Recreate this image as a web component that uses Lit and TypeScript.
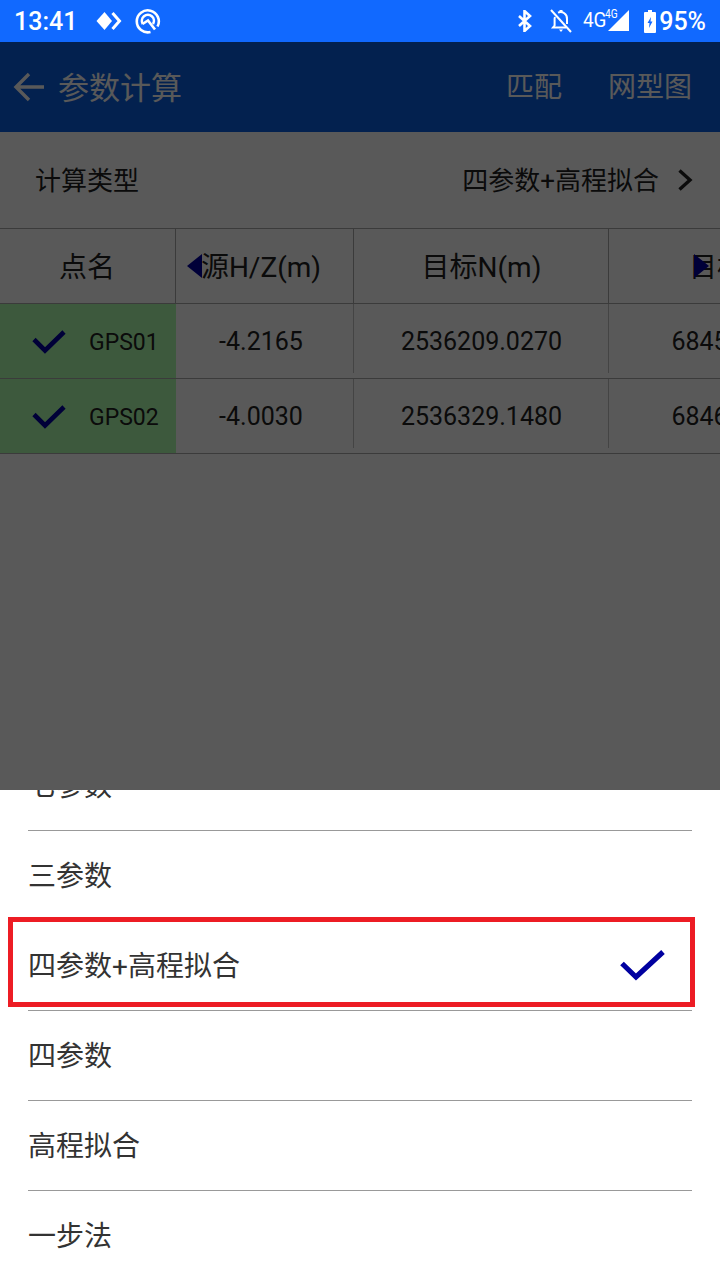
import { LitElement, html, css } from "lit";
import { customElement } from "lit/decorators.js";

const CHECK_SM = html`<svg class="chk" width="34" height="26" viewBox="0 0 34 26"><path d="M2 10.5 L13 21.5 L32 3" fill="none" stroke="#0000a0" stroke-width="4.6"/></svg>`;

@customElement("app-root")
export class AppRoot extends LitElement {
  static styles = css`
    :host { display: block; width: 720px; height: 1280px; overflow: hidden; font-family: Roboto, "Noto Sans CJK SC", sans-serif; background: #fff; }
    .page { display: flex; flex-direction: column; height: 1280px; }
    .status { height: 42px; flex: none; background: #1169ff; color: #fff; display: flex; align-items: center; padding: 0 14px; box-sizing: border-box; font-weight: 500; }
    .time { font-size: 25px; width: 82px; line-height: 42px; padding-top: 1px; }
    .status svg { display: block; flex: none; }
    .spacer { flex: 1; }
    .net { position: relative; width: 46px; height: 42px; margin-left: 11px; flex: none; }
    .net .big { position: absolute; left: 0; top: 8px; font-size: 21px; line-height: 24px; font-weight: 400; transform: scaleX(.9); transform-origin: left; }
    .net .small { position: absolute; left: 22px; top: 7px; font-size: 12px; line-height: 14px; font-weight: 400; transform: scaleX(.85); transform-origin: left; }
    .pct { font-size: 25px; line-height: 42px; margin-left: 3px; padding-top: 1px; }
    .screen { position: relative; flex: none; height: 748px; background: #fff; overflow: hidden; }
    .overlay { position: absolute; inset: 0; background: rgba(0,0,0,.65); }
    .bar { height: 90px; background: #095ee2; color: #fff; display: flex; align-items: center; padding: 0 28px 0 12px; box-sizing: border-box; }
    .bar span { padding-bottom: 4px; }
    .bar svg { margin-bottom: 1px; }
    .title { font-size: 31px; margin-left: 12px; flex: 1; }
    .act { font-size: 28px; margin-left: 47px; }
    .act.first { transform: translateX(1px); }
    .type { height: 97px; display: flex; align-items: center; padding: 0 26px 0 35px; font-size: 26px; color: #222; border-bottom: 1px solid #aaa; box-sizing: border-box; }
    .type span { padding-bottom: 4px; }
    .type .lab { flex: 1; }
    .type svg { margin-left: 17px; margin-bottom: 1px; }
    .table { position: relative; overflow: hidden; }
    .row { display: grid; grid-template-columns: 176px 178px 255px 286px; width: 895px; height: 75px; box-sizing: border-box; border-bottom: 1px solid #aaa; }
    .cell { display: flex; align-items: center; justify-content: center; font-size: 25px; color: #222; position: relative; white-space: nowrap; }
    .cell.v::after { content: ""; position: absolute; right: 0; top: 0; bottom: 5px; width: 1px; background: #c4c4c4; }
    .head .cell { font-size: 28px; padding-bottom: 3px; }
    .head .cell.v::after { bottom: 0; background: #aaa; }
    .head .first { padding-right: 2px; }
    .head .second { padding-right: 8px; }
    .head .fourth { padding-right: 10px; }
    .name { background: #aeffae; justify-content: flex-start; padding-left: 32px; font-size: 23px; }
    .name .chk { margin-right: 23px; flex: none; margin-top: 2px; }
    .name span { margin-top: 3px; }
    .offset { padding-right: 8px; }
    .tri { position: absolute; top: 25px; }
    .tri.l { left: 187px; }
    .tri.r { left: 694px; }
    .sheet { flex: none; height: 490px; overflow: hidden; position: relative; background: #fff; }
    .list { margin-top: -49px; }
    .item { height: 90px; margin: 0 28px; box-sizing: border-box; border-bottom: 1px solid #999; display: flex; align-items: center; font-size: 28px; color: #333; justify-content: space-between; padding-bottom: 4px; }
    .item:last-child { border-bottom: none; }
    .item svg { margin-right: 26px; margin-top: 3px; }
    .mark { position: absolute; left: 8px; top: 127px; width: 687px; height: 90px; box-sizing: border-box; border: 5px solid #ed1c24; }
  `;

  render() {
    const head = ["点名", "源H/Z(m)", "目标N(m)", "目标E(m)"];
    const headCls = ["v first", "v second", "v", "fourth"];
    const rows = [
      ["GPS01", "-4.2165", "2536209.0270", "6845"],
      ["GPS02", "-4.0030", "2536329.1480", "6846"],
    ];
    const items = ["七参数", "三参数", "四参数+高程拟合", "四参数", "高程拟合", "一步法"];
    return html`<div class="page">
      <div class="status">
        <span class="time">13:41</span>
        <svg width="26" height="20" viewBox="0 0 26 20"><path d="M8.5 1 L16 10 L8.5 19 L0.5 10 Z" fill="#fff"/><path d="M16.5 2 L23.5 10 L16.5 18" fill="none" stroke="#fff" stroke-width="3"/></svg>
        <svg style="margin-left:13px" width="26" height="26" viewBox="0 0 26 26"><path d="M15.5 24 A11 11 0 1 1 22.5 18.5" fill="none" stroke="#fff" stroke-width="2.6"/><path d="M7.8 16 A6 6 0 1 1 18 16" fill="none" stroke="#fff" stroke-width="2.6"/><path d="M7.5 16 L13 12.5 L20 21.5" fill="none" stroke="#fff" stroke-width="2.6"/></svg>
        <span class="spacer"></span>
        <svg width="16" height="22" viewBox="0 0 16 22"><path d="M2 6 L13 16 L7.5 21 L7.5 1 L13 6 L2 16" fill="none" stroke="#fff" stroke-width="2.6"/></svg>
        <svg style="margin-left:17px" width="22" height="24" viewBox="0 0 22 24"><path d="M5 8 Q4.6 9 4.6 10 V16.5 L3 18.5 H16 M8 3.6 A6.5 6.5 0 0 1 17 10 V15" fill="none" stroke="#fff" stroke-width="2"/><path d="M9.5 1 H12.5 V3 H9.5 Z M9 20.5 H13 L11 23 Z" fill="#fff"/><path d="M1 1 L21 23" stroke="#fff" stroke-width="2"/></svg>
        <div class="net"><span class="big">4G</span><span class="small">4G</span>
          <svg style="position:absolute;left:25px;top:10px" width="21" height="21" viewBox="0 0 21 21"><path d="M21 0 V21 H0 Z" fill="#fff"/></svg></div>
        <svg style="margin-left:15px" width="12" height="23" viewBox="0 0 12 23"><path fill-rule="evenodd" d="M4 0 H8 V2 H11 A1 1 0 0 1 12 3 V22 A1 1 0 0 1 11 23 H1 A1 1 0 0 1 0 22 V3 A1 1 0 0 1 1 2 H4 Z M7 7 L3.5 13 H5.5 L5 18 L8.5 11.5 H6.5 Z" fill="#fff"/></svg>
        <span class="pct">95%</span>
      </div>
      <div class="screen">
        <div class="bar">
          <svg width="34" height="32" viewBox="0 0 34 32"><path d="M32 16 H4 M17 3 L4 16 L17 29" fill="none" stroke="#fff" stroke-width="3.4"/></svg>
          <span class="title">参数计算</span>
          <span class="act first">匹配</span>
          <span class="act">网型图</span>
        </div>
        <div class="type">
          <span class="lab">计算类型</span>
          <span>四参数+高程拟合</span>
          <svg width="18" height="26" viewBox="0 0 18 26"><path d="M3.5 3.5 L14 13 L3.5 22.5" fill="none" stroke="#222" stroke-width="3.4"/></svg>
        </div>
        <div class="table">
          <div class="row head">
            ${head.map((h, i) => html`<div class="cell ${headCls[i]}">${h}</div>`)}
          </div>
          ${rows.map((r) => html`<div class="row">
            <div class="cell name">${CHECK_SM}<span>${r[0]}</span></div>
            <div class="cell v offset"><span>${r[1]}</span></div>
            <div class="cell v"><span>${r[2]}</span></div>
            <div class="cell"><span>${r[3]}000.0000</span></div>
          </div>`)}
          <svg class="tri l" width="15" height="24" viewBox="0 0 15 24"><path d="M15 0 V24 L0 12 Z" fill="#0000a0"/></svg>
          <svg class="tri r" width="15" height="24" viewBox="0 0 15 24"><path d="M0 0 V24 L15 12 Z" fill="#0000a0"/></svg>
        </div>
        <div class="overlay"></div>
      </div>
      <div class="sheet">
        <div class="list">
          ${items.map((t, i) => html`<div class="item"><span>${t}</span>${i === 2
            ? html`<svg width="46" height="32" viewBox="0 0 46 32"><path d="M2 14.5 L16 28 L43 3" fill="none" stroke="#0000a0" stroke-width="5.2"/></svg>`
            : ""}</div>`)}
        </div>
        <div class="mark"></div>
      </div>
    </div>`;
  }
}
